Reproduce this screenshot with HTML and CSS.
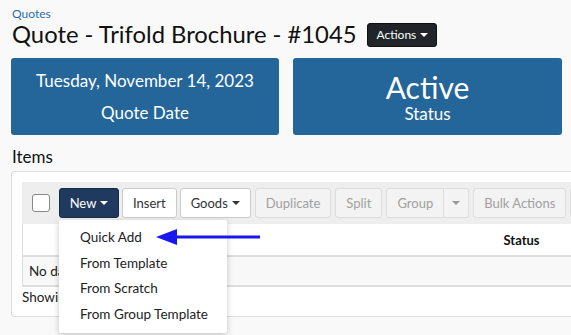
FILE: index.html
```html
<!DOCTYPE html>
<html>
<head>
<meta charset="utf-8">
<link rel="stylesheet" href="styles.css">
</head>
<body>
<div class="page">
  <a class="crumb" href="#">Quotes</a>
  <div class="title-row">
    <h1 class="title">Quote - Trifold Brochure - #1045</h1>
    <button class="btn-actions">Actions<span class="caret white"></span></button>
  </div>
  <div class="stats">
    <div class="stat">
      <div class="stat-line">Tuesday, November 14, 2023</div>
      <div class="stat-line">Quote Date</div>
    </div>
    <div class="stat">
      <div class="stat-big">Active</div>
      <div class="stat-label">Status</div>
    </div>
  </div>
  <h2 class="section">Items</h2>
  <div class="panel">
    <div class="toolbar">
      <span class="check"></span>
      <div class="new-wrap">
        <button class="btn btn-new">New<span class="caret white"></span></button>
        <div class="menu">
          <div class="menu-item">Quick Add</div>
          <div class="menu-item">From Template</div>
          <div class="menu-item">From Scratch</div>
          <div class="menu-item">From Group Template</div>
        </div>
        <svg class="arrow" width="110" height="18" viewBox="0 0 110 18">
          <line x1="18" y1="9" x2="104" y2="9" stroke="#1717ee" stroke-width="3"/>
          <polygon points="0,9 21,1 21,17" fill="#1717ee"/>
        </svg>
      </div>
      <button class="btn">Insert</button>
      <button class="btn">Goods<span class="caret"></span></button>
      <button class="btn dis gap1">Duplicate</button>
      <button class="btn dis gap1">Split</button>
      <div class="split gap1">
        <button class="btn dis grp">Group</button>
        <button class="btn dis grp-caret"><span class="caret grey"></span></button>
      </div>
      <button class="btn dis gap1">Bulk Actions</button>
      <button class="btn dis gap1">Columns</button>
    </div>
    <table class="grid">
      <colgroup><col class="c1"><col class="c2"><col class="c3"></colgroup>
      <thead>
        <tr><th></th><th></th><th class="status">Status</th></tr>
      </thead>
      <tbody>
        <tr><td colspan="3" class="empty">No data available in table</td></tr>
      </tbody>
    </table>
    <div class="info">Showing 0 to 0 of 0 entries</div>
  </div>
</div>
</body>
</html>
```
FILE: styles.css
```css
html, body {
  margin: 0;
  background: #f9f9f9;
}
body {
  font-family: "Lato", "Liberation Sans", sans-serif;
  color: #222;
  overflow: hidden;
  width: 571px;
  height: 335px;
}
.page {
  padding: 7px 9px 0 11px;
}
.crumb {
  display: block;
  font-size: 12px;
  line-height: 14px;
  color: #2f6cb3;
  text-decoration: none;
  padding-left: 1px;
}
.title-row {
  display: flex;
  align-items: center;
  gap: 10px;
  height: 27px;
}
.title {
  margin: 0;
  font-size: 23.8px;
  font-weight: 400;
  color: #111;
  line-height: 27px;
  padding-left: 1px;
}
.btn-actions {
  font-family: inherit;
  background: #212529;
  color: #fff;
  border: 1px solid #111;
  border-radius: 3px;
  height: 24px;
  padding: 0 8px 0 9px;
  font-size: 12px;
  display: flex;
  align-items: center;
}
.caret {
  display: inline-block;
  width: 0;
  height: 0;
  border-left: 4px solid transparent;
  border-right: 4px solid transparent;
  border-top: 4px solid #333;
  margin-left: 4px;
  vertical-align: middle;
}
.caret.white { border-top-color: #fff; }
.caret.grey { border-top-color: #999; margin: 0; }
.stats {
  display: grid;
  grid-template-columns: 268px 269px;
  gap: 14px;
  margin-top: 10px;
}
.stat {
  background: #246699;
  color: #fff;
  border-radius: 3px;
  height: 77px;
  display: flex;
  flex-direction: column;
  align-items: center;
  justify-content: center;
  text-align: center;
}
.stat-line {
  font-size: 17px;
  line-height: 32px;
}
.stat-big {
  font-size: 30px;
  line-height: 34px;
}
.stat-label {
  font-size: 17px;
  line-height: 20px;
}
.section {
  margin: 10px 0 0 1px;
  font-size: 17px;
  font-weight: 400;
  line-height: 24px;
  color: #111;
}
.panel {
  margin-top: 2px;
  width: 700px;
  background: #fff;
  border: 1px solid #ddd;
  border-radius: 3px;
  padding: 10px 10px 10px 10px;
  box-sizing: border-box;
}
.toolbar {
  background: #eeeeee;
  display: flex;
  align-items: center;
  padding: 6px 0 6px 10px;
  gap: 3px;
}
.check {
  width: 16px;
  height: 16px;
  border: 1px solid #888;
  border-radius: 3px;
  background: #fff;
  margin-right: 6px;
}
.btn {
  font-family: inherit;
  font-size: 13px;
  height: 30px;
  padding: 0 10px;
  background: #fff;
  color: #333;
  border: 1px solid #ccc;
  border-radius: 3px;
  display: flex;
  align-items: center;
  white-space: nowrap;
}
.btn-new {
  background: #1f3a5e;
  border-color: #162c48;
  color: #fff;
  width: 60px;
  justify-content: center;
  padding: 0;
}
.new-wrap {
  position: relative;
}
.dis {
  background: #f3f3f3;
  color: #a0a0a0;
  border-color: #ddd;
}
.gap1 { margin-left: 1px; }
.split {
  display: flex;
}
.grp {
  border-radius: 3px 0 0 3px;
}
.grp-caret {
  border-radius: 0 3px 3px 0;
  border-left: none;
  width: 25px;
  padding: 0;
  justify-content: center;
}
.menu {
  position: absolute;
  left: 0;
  top: 32px;
  width: 168px;
  background: #fff;
  box-shadow: 0 2px 6px rgba(0,0,0,0.22);
  border-radius: 2px;
  padding: 5px 0;
  z-index: 5;
}
.menu-item {
  font-size: 13.5px;
  line-height: 25.7px;
  padding-left: 21px;
  color: #222;
  white-space: nowrap;
}
.arrow {
  position: absolute;
  left: 97px;
  top: 40px;
  z-index: 6;
}
.grid {
  border-collapse: collapse;
  table-layout: fixed;
  width: 680px;
  border-left: 1px solid #ddd;
}
.c1 { width: 36px; }
.c2 { width: 437px; }
.c3 { width: 207px; }
.grid th {
  height: 31px;
  padding: 0 8px;
  font-size: 13px;
  text-align: left;
  border-bottom: 2px solid #ddd;
  color: #111;
}
.grid td.empty {
  height: 28px;
  padding: 0 6px;
  font-size: 13.5px;
  background: #f8f8f8;
  border-bottom: 2px solid #ddd;
}
.info {
  font-size: 13.5px;
  line-height: 18px;
  margin-top: 1px;
}
```
